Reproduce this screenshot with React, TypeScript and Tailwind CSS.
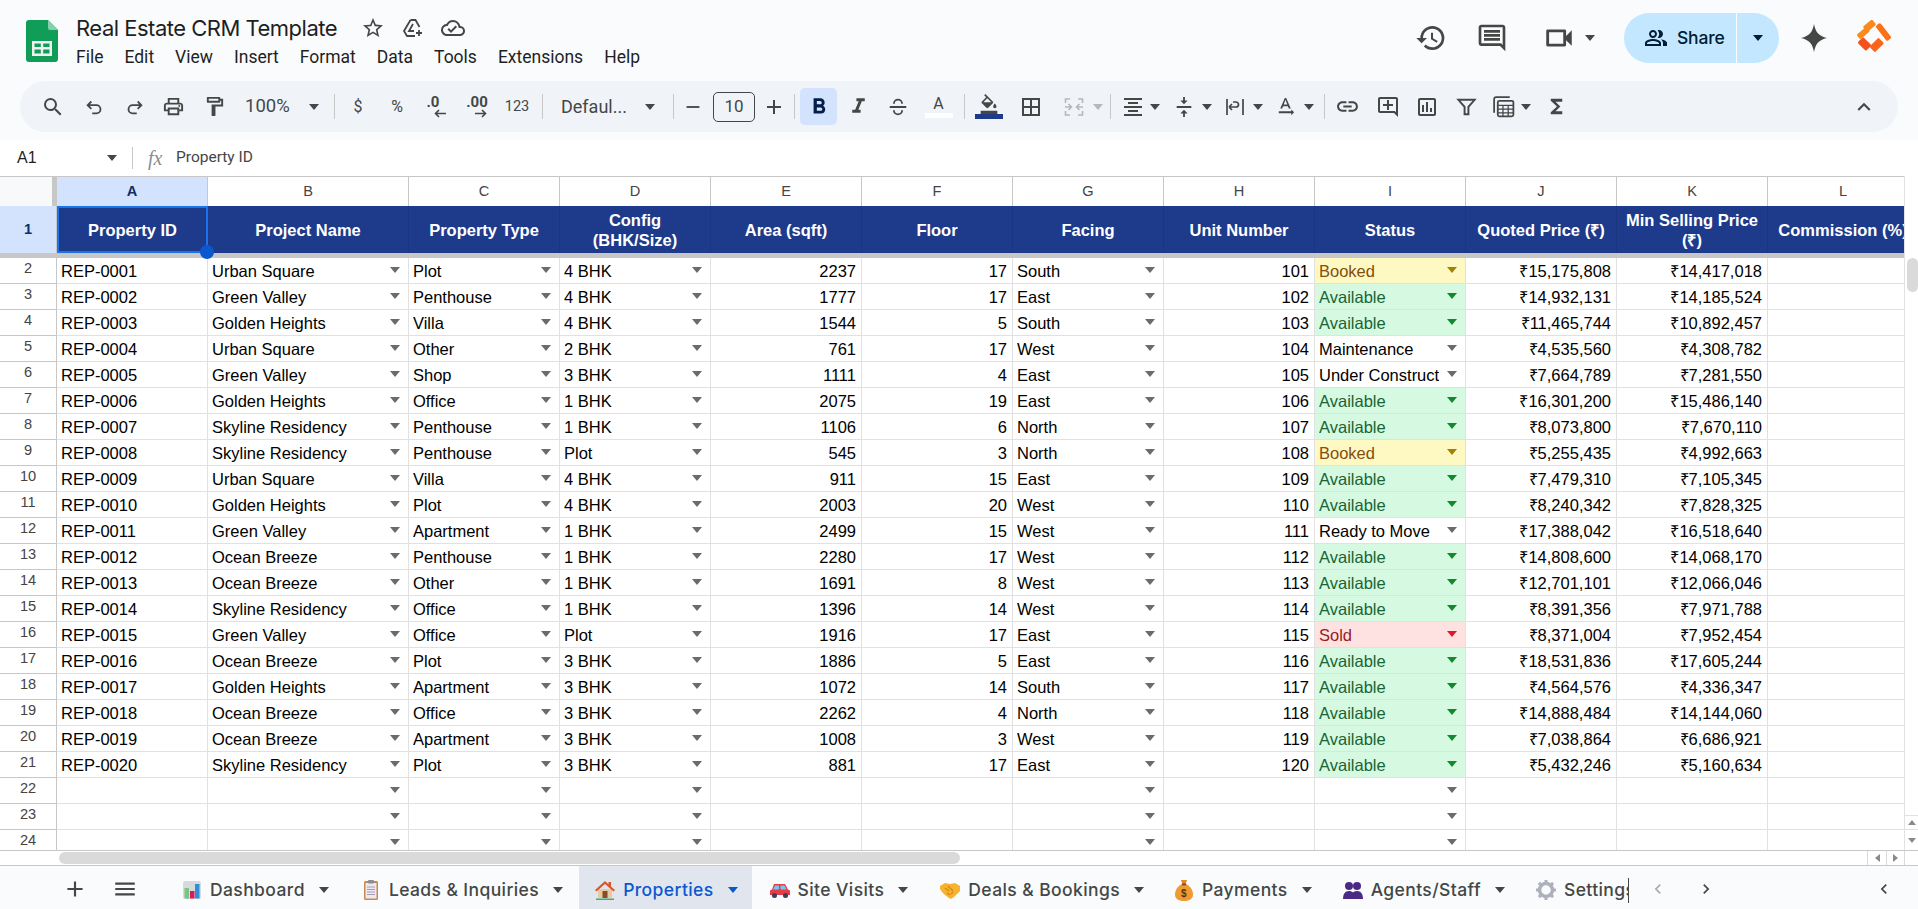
import React from 'react';
import {
  MdSearch, MdOutlinePrint, MdOutlineFormatPaint, MdRemove, MdAdd, MdFormatBold, MdFormatItalic,
  MdFormatColorFill, MdBorderAll, MdFormatAlignCenter, MdVerticalAlignCenter, MdOutlineTextRotationNone,
  MdLink, MdOutlineAddComment, MdOutlineInsertChart, MdFunctions, MdKeyboardArrowUp, MdHistory,
  MdOutlineComment, MdOutlineVideocam, MdOutlinePeopleAlt, MdStarBorder, MdOutlineCloudDone,
  MdMenu, MdChevronLeft, MdChevronRight,
} from 'react-icons/md';

const Caret = ({ className = 'text-[#444746]' }: { className?: string }) => (
  <svg width="10" height="6" viewBox="0 0 10 6" className={`shrink-0 ${className}`}>
    <path d="M0 0h10L5 6z" fill="currentColor" />
  </svg>
);

const Sep = ({ className }: { className: string }) => <div className={`w-px h-[25px] shrink-0 bg-[#c7c7c7] ${className}`} />;

const Tool = ({ className, children }: { className: string; children: React.ReactNode }) => (
  <div className={`flex items-center justify-center shrink-0 h-full text-[#444746] ${className}`}>{children}</div>
);

const Line = ({ size = 22, strokeWidth = 2, children }: { size?: number; strokeWidth?: number; children: React.ReactNode }) => (
  <svg width={size} height={size} viewBox="0 0 24 24" fill="none" stroke="currentColor" strokeWidth={strokeWidth}>
    {children}
  </svg>
);

const SheetsLogo = () => (
  <svg width="32" height="42" viewBox="0 0 32 42">
    <path d="M3 0h19l10 10v29a3 3 0 0 1-3 3H3a3 3 0 0 1-3-3V3a3 3 0 0 1 3-3z" fill="#0f9d58" />
    <path d="M22 0l10 10H24a2 2 0 0 1-2-2z" fill="#87ceac" />
    <path d="M6 21h20v15H6z M8.500 23.500v3.500h6.300v-3.500z M17.200 23.500v3.500h6.300v-3.500z M8.500 29.500v4h6.300v-4z M17.200 29.500v4h6.300v-4z" fill="#f1f1f1" fillRule="evenodd" />
  </svg>
);

const BrandLogo = () => (
  <svg width="36" height="38" viewBox="0 0 36 38">
    <rect x="0.800" y="11" width="13" height="6" rx="1.500" transform="rotate(-40 7.300 14)" fill="#fb8a1e" />
    <rect x="7.500" y="3.200" width="12" height="7" rx="1.500" transform="rotate(-40 13.500 6.700)" fill="#fb8a1e" />
    <rect x="18" y="10" width="19" height="6" rx="1.500" transform="rotate(52 27.500 13)" fill="#f97316" />
    <rect x="2.500" y="21" width="12" height="8" rx="1.500" transform="rotate(45 8.500 25)" fill="#f4511e" />
    <rect x="14.200" y="22" width="13" height="8" rx="1.500" transform="rotate(-45 20.700 26)" fill="#f9661b" />
  </svg>
);

const Gemini = () => (
  <svg width="26" height="28" viewBox="0 0 26 28">
    <path d="M13 0c1.500 8 4.500 12 13 14-8.500 2-11.500 6-13 14-1.500-8-4.500-12-13-14 8.500-2 11.500-6 13-14z" fill="#444746" />
  </svg>
);

const IconChart = () => (
  <svg width="20" height="20" viewBox="0 0 20 20">
    <rect x="1" y="1" width="18" height="18" rx="2.500" fill="#d7dadd" />
    <rect x="2.500" y="8" width="4.500" height="10.500" fill="#7bc67e" />
    <rect x="8" y="11" width="4.500" height="7.500" fill="#d81b60" />
    <rect x="13" y="4" width="4.500" height="14.500" fill="#2f8fd8" />
  </svg>
);

const IconClipboard = () => (
  <svg width="20" height="22" viewBox="0 0 20 22">
    <rect x="3" y="2" width="14" height="19" rx="1.500" fill="#c98a4b" />
    <rect x="4.500" y="4" width="11" height="15.500" fill="#ece8f4" />
    <rect x="7" y="1" width="6" height="3.500" rx="1" fill="#8d8d8d" />
    <path d="M6 8h8M6 10.500h8M6 13h8M6 15.500h8" stroke="#a49cb4" strokeWidth="1" />
  </svg>
);

const IconHouse = () => (
  <svg width="22" height="22" viewBox="0 0 22 22">
    <path d="M4 10h14v9H4z" fill="#e8c9a0" />
    <path d="M11 2L1 11l1.500 1.500L11 5l8.500 7.500L21 11l-4-3.500V3h-2.500v2.300z" fill="#d9582b" />
    <path d="M8.500 12h5v7h-5z" fill="#8a4b2d" />
    <path d="M2 19.500h18V21H2z" fill="#38b26a" />
  </svg>
);

const IconCar = () => (
  <svg width="22" height="20" viewBox="0 0 22 20">
    <path d="M5 4h11l3 5.500 2 1V15H1v-4.500l2-1z" fill="#e53c4a" />
    <path d="M6 5.500h4v4H4zM11.500 5.500h4l2 4h-6z" fill="#7cc4ec" />
    <circle cx="5.500" cy="15.500" r="2.500" fill="#3b3f57" />
    <circle cx="16.500" cy="15.500" r="2.500" fill="#3b3f57" />
  </svg>
);

const IconHandshake = () => (
  <svg width="22" height="22" viewBox="0 0 22 22">
    <path d="M1 7l5-3 5 1 5-1 5 3v5l-3 3-3 3-3 2-2-1-4-3-3-3-2-3z" fill="#f7b32b" />
    <path d="M6 9l4 3M9 7l5 5M8 14l3 2M12 15l2-2" stroke="#d98316" strokeWidth="1.200" fill="none" />
  </svg>
);

const IconMoney = () => (
  <svg width="20" height="24" viewBox="0 0 20 24">
    <path d="M7 2h6l-1.500 4.500h-3z" fill="#e08a2c" />
    <path d="M8 6h4c4 2 7 6 7 10.500 0 4-3 6.500-9 6.500s-9-2.500-9-6.500C1 12 4 8 8 6z" fill="#f09a34" />
    <path d="M8 5.500h4v1.800H8z" fill="#7a4a1a" />
    <text x="10" y="19" fontSize="10" fontWeight="700" textAnchor="middle" fill="#5b3310" fontFamily="'Liberation Sans', sans-serif">$</text>
  </svg>
);

const IconBusts = () => (
  <svg width="22" height="20" viewBox="0 0 22 20">
    <circle cx="7" cy="6" r="4" fill="#4b2a86" />
    <circle cx="15" cy="6" r="4" fill="#4b2a86" />
    <path d="M1 19c0-5 2-8 6-8 1.500 0 3 .5 4 1.500 1-1 2.500-1.500 4-1.500 4 0 6 3 6 8z" fill="#4b2a86" />
  </svg>
);

const IconGear = () => (
  <svg width="22" height="22" viewBox="0 0 22 22">
    <circle cx="11" cy="11" r="6.500" fill="none" stroke="#aeb1bd" strokeWidth="3.500" />
    <path d="M11 1v4M11 17v4M1 11h4M17 11h4M3.900 3.900l2.800 2.800M15.300 15.300l2.800 2.800M3.900 18.100l2.800-2.800M15.300 6.700l2.800-2.800" stroke="#aeb1bd" strokeWidth="3" />
  </svg>
);

const tabs = [
  { name: 'Dashboard', icon: <IconChart />, pad: 'pr-[14px]' },
  { name: 'Leads & Inquiries', icon: <IconClipboard />, pad: 'pr-[14px]' },
  { name: 'Properties', icon: <IconHouse />, pad: 'pr-[14px]', active: true },
  { name: 'Site Visits', icon: <IconCar />, pad: 'pr-[14px]' },
  { name: 'Deals & Bookings', icon: <IconHandshake />, pad: 'pr-[12px]' },
  { name: 'Payments', icon: <IconMoney />, pad: 'pr-[13px]' },
  { name: 'Agents/Staff', icon: <IconBusts />, pad: 'pr-[13px]' },
  { name: 'Settings', icon: <IconGear />, pad: 'pr-[14px]' },
];

const menu = ['File', 'Edit', 'View', 'Insert', 'Format', 'Data', 'Tools', 'Extensions', 'Help'];

const letters = ['A', 'B', 'C', 'D', 'E', 'F', 'G', 'H', 'I', 'J', 'K', 'L'];

const headers = [
  'Property ID', 'Project Name', 'Property Type', 'Config\n(BHK/Size)', 'Area (sqft)', 'Floor', 'Facing', 'Unit Number',
  'Status', 'Quoted Price (₹)', 'Min Selling Price\n(₹)', 'Commission (%)',
];

type Row = [string, string, string, string, number, number, string, number, string, string, string];

const rows: Row[] = [
  ['REP-0001', 'Urban Square', 'Plot', '4 BHK', 2237, 17, 'South', 101, 'Booked', '₹15,175,808', '₹14,417,018'],
  ['REP-0002', 'Green Valley', 'Penthouse', '4 BHK', 1777, 17, 'East', 102, 'Available', '₹14,932,131', '₹14,185,524'],
  ['REP-0003', 'Golden Heights', 'Villa', '4 BHK', 1544, 5, 'South', 103, 'Available', '₹11,465,744', '₹10,892,457'],
  ['REP-0004', 'Urban Square', 'Other', '2 BHK', 761, 17, 'West', 104, 'Maintenance', '₹4,535,560', '₹4,308,782'],
  ['REP-0005', 'Green Valley', 'Shop', '3 BHK', 1111, 4, 'East', 105, 'Under Construction', '₹7,664,789', '₹7,281,550'],
  ['REP-0006', 'Golden Heights', 'Office', '1 BHK', 2075, 19, 'East', 106, 'Available', '₹16,301,200', '₹15,486,140'],
  ['REP-0007', 'Skyline Residency', 'Penthouse', '1 BHK', 1106, 6, 'North', 107, 'Available', '₹8,073,800', '₹7,670,110'],
  ['REP-0008', 'Skyline Residency', 'Penthouse', 'Plot', 545, 3, 'North', 108, 'Booked', '₹5,255,435', '₹4,992,663'],
  ['REP-0009', 'Urban Square', 'Villa', '4 BHK', 911, 15, 'East', 109, 'Available', '₹7,479,310', '₹7,105,345'],
  ['REP-0010', 'Golden Heights', 'Plot', '4 BHK', 2003, 20, 'West', 110, 'Available', '₹8,240,342', '₹7,828,325'],
  ['REP-0011', 'Green Valley', 'Apartment', '1 BHK', 2499, 15, 'West', 111, 'Ready to Move', '₹17,388,042', '₹16,518,640'],
  ['REP-0012', 'Ocean Breeze', 'Penthouse', '1 BHK', 2280, 17, 'West', 112, 'Available', '₹14,808,600', '₹14,068,170'],
  ['REP-0013', 'Ocean Breeze', 'Other', '1 BHK', 1691, 8, 'West', 113, 'Available', '₹12,701,101', '₹12,066,046'],
  ['REP-0014', 'Skyline Residency', 'Office', '1 BHK', 1396, 14, 'West', 114, 'Available', '₹8,391,356', '₹7,971,788'],
  ['REP-0015', 'Green Valley', 'Office', 'Plot', 1916, 17, 'East', 115, 'Sold', '₹8,371,004', '₹7,952,454'],
  ['REP-0016', 'Ocean Breeze', 'Plot', '3 BHK', 1886, 5, 'East', 116, 'Available', '₹18,531,836', '₹17,605,244'],
  ['REP-0017', 'Golden Heights', 'Apartment', '3 BHK', 1072, 14, 'South', 117, 'Available', '₹4,564,576', '₹4,336,347'],
  ['REP-0018', 'Ocean Breeze', 'Office', '3 BHK', 2262, 4, 'North', 118, 'Available', '₹14,888,484', '₹14,144,060'],
  ['REP-0019', 'Ocean Breeze', 'Apartment', '3 BHK', 1008, 3, 'West', 119, 'Available', '₹7,038,864', '₹6,686,921'],
  ['REP-0020', 'Skyline Residency', 'Plot', '3 BHK', 881, 17, 'East', 120, 'Available', '₹5,432,246', '₹5,160,634'],
];

const gridCols = 'grid grid-cols-[57px_151px_201px_repeat(10,151px)] w-[1920px]';
const cellBase = 'h-[26px] border-r border-b border-[#e1e1e1] flex items-center overflow-hidden whitespace-nowrap pt-[2px]';

const statusStyle: Record<string, { cell: string; caret: string }> = {
  Booked: { cell: 'bg-[#fef9c3] text-[#854d0e]', caret: 'text-[#a18207]' },
  Available: { cell: 'bg-[#d6f9e2] text-[#166534]', caret: 'text-[#12892e]' },
  Sold: { cell: 'bg-[#fee2e2] text-[#991b1b]', caret: 'text-[#e0182d]' },
};

const TextCell = ({ value }: { value: string }) => <div className={`${cellBase} pl-[4px]`}>{value}</div>;

const NumCell = ({ value }: { value: string | number }) => <div className={`${cellBase} justify-end pr-[5px]`}>{value}</div>;

const DropCell = ({ value, className = '', caret = 'text-[#6b6b6b]' }: { value?: string; className?: string; caret?: string }) => (
  <div className={`${cellBase} pl-[4px] pr-[8px] ${className}`}>
    <span className="flex-1 min-w-0 overflow-hidden">{value}</span>
    <Caret className={`ml-[8px] mb-[3px] ${caret}`} />
  </div>
);

const RowNum = ({ n }: { n: number }) => (
  <div className="h-[26px] border-r border-b border-[#c7c7c7] flex items-center justify-center pb-[3px] text-[14.6px] text-[#444]">{n}</div>
);

const App: React.FC = () => {
  return (
    <div className="w-[1918px] h-[909px] overflow-hidden flex flex-col bg-white font-['Liberation_Sans',sans-serif] text-black">
      {/* Title bar and toolbar */}
      <div className="h-[140px] shrink-0 bg-[#f9fbfd] flex flex-col font-['Roboto',sans-serif]">
        <div className="h-[81px] flex items-start shrink-0">
          <div className="ml-[26px] mt-[20px]"><SheetsLogo /></div>
          <div className="ml-[18px] mt-[13px] flex flex-col">
            <div className="flex items-center h-[30px]">
              <span className="text-[22px] text-[#1f1f1f] font-['Inter',sans-serif] tracking-[-0.5px]">Real Estate CRM Template</span>
              <div className="flex items-center ml-[24px] text-[#444746] gap-[16px]">
                <MdStarBorder size={24} />
                <Line size={24} strokeWidth={1.8}>
                  <path d="M9.500 4L3 15l3 5h8M9.500 4h5l4 7M12 8l-4 7h5M18 14v6M15 17h6" />
                </Line>
                <MdOutlineCloudDone size={24} />
              </div>
            </div>
            <div className="flex items-center mt-[1px] h-[27px] gap-[21px] text-[17.5px] text-[#1f1f1f]">
              {menu.map(m => <span key={m}>{m}</span>)}
            </div>
          </div>
          <div className="ml-auto flex items-center h-[50px] mt-[13px] text-[#444746]">
            <MdHistory size={32} />
            <div className="ml-[29px]"><MdOutlineComment size={32} /></div>
            <div className="ml-[34px]"><MdOutlineVideocam size={34} /></div>
            <Caret className="ml-[9px] text-[#444746]" />
            <div className="ml-[29px] w-[155px] h-[50px] rounded-full bg-[#c2e7ff] flex items-center text-[#001d35]">
              <div className="w-[113px] h-full flex items-center pl-[20px] gap-[9px] border-r border-[#f9fbfd]">
                <MdOutlinePeopleAlt size={24} />
                <span className="text-[17.5px] font-medium font-['Inter',sans-serif] tracking-[-0.2px]">Share</span>
              </div>
              <div className="flex-1 flex items-center justify-center"><Caret className="text-[#001d35]" /></div>
            </div>
            <div className="ml-[22px]"><Gemini /></div>
            <div className="ml-[29px] mr-[26px]"><BrandLogo /></div>
          </div>
        </div>

        <div className="ml-[20px] w-[1878px] h-[51px] shrink-0 rounded-full bg-[#f0f4f9] flex items-center pl-[12px] text-[#444746]">
          <Tool className="w-[42px]"><MdSearch size={24} /></Tool>
          <Tool className="w-[42px]">
            <Line><path d="M8 6l-4 4 4 4M4 10h9.500a4.500 4.500 0 0 1 0 9H9" /></Line>
          </Tool>
          <Tool className="w-[36px]">
            <Line><path d="M16 6l4 4-4 4M20 10h-9.500a4.500 4.500 0 0 0 0 9H15" /></Line>
          </Tool>
          <Tool className="w-[43px]"><MdOutlinePrint size={23} /></Tool>
          <Tool className="w-[38px]"><MdOutlineFormatPaint size={23} /></Tool>
          <div className="w-[91px] h-full shrink-0 flex items-center justify-between pl-[12px] pr-[5px] text-[18.5px]"><span>100%</span><Caret /></div>
          <Sep className="ml-[10px]" />
          <Tool className="w-[46px] text-[16px]">$</Tool>
          <Tool className="w-[32px] text-[16px]">%</Tool>
          <Tool className="w-[48px] flex-col">
            <span className="text-[15px] font-bold leading-[13px] -ml-[8px]">.0</span>
            <svg width="12" height="9" viewBox="0 0 12 9" className="ml-[6px]"><path d="M12 4.500H2M5 1L1.500 4.500 5 8" fill="none" stroke="currentColor" strokeWidth="1.600" /></svg>
          </Tool>
          <Tool className="w-[32px] flex-col">
            <span className="text-[15px] font-bold leading-[13px]">.00</span>
            <svg width="12" height="9" viewBox="0 0 12 9" className="ml-[8px]"><path d="M0 4.500h10M7 1l3.500 3.500L7 8" fill="none" stroke="currentColor" strokeWidth="1.600" /></svg>
          </Tool>
          <Tool className="w-[48px] text-[14.6px]">123</Tool>
          <Sep className="ml-[1px]" />
          <div className="w-[123px] h-full shrink-0 flex items-center justify-between pl-[18px] pr-[11px] text-[18px]"><span>Defaul...</span><Caret /></div>
          <Sep className="ml-[7px]" />
          <Tool className="w-[37px]"><MdRemove size={22} /></Tool>
          <div className="w-[42px] h-[30px] ml-[2px] shrink-0 border border-[#444746] rounded-[5px] flex items-center justify-center text-[17px]">10</div>
          <Tool className="w-[38px]"><MdAdd size={24} /></Tool>
          <Sep className="ml-[1px]" />
          <div className="ml-[5px] w-[37px] h-[37px] shrink-0 rounded-[5px] bg-[#d3e3fd] flex items-center justify-center text-[#041e49]"><MdFormatBold size={26} /></div>
          <Tool className="w-[42px]"><MdFormatItalic size={25} /></Tool>
          <Tool className="w-[38px]">
            <Line><path d="M3 12h18M7.500 8.500a4.500 4.500 0 0 1 9 0M7.500 15.500a4.500 4.500 0 0 0 9 0" /></Line>
          </Tool>
          <Tool className="w-[43px] flex-col">
            <span className="text-[16px] leading-[18px]">A</span>
            <div className="w-[28px] h-[5px] bg-white" />
          </Tool>
          <Sep className="ml-[4px]" />
          <Tool className="w-[48px] flex-col">
            <MdFormatColorFill size={20} />
            <div className="w-[28px] h-[5px] bg-[#1e3a8a]" />
          </Tool>
          <Tool className="w-[35px]"><MdBorderAll size={24} /></Tool>
          <Tool className="w-[45px] pl-[6px]">
            <svg width="22" height="22" viewBox="0 0 22 22" fill="none" stroke="#b4b7bb" strokeWidth="1.600">
              <path d="M7 3H2.500v4M2.500 15v4H7M15 3h4.500v4M19.500 15v4H15M2 11h6M5.500 8l3 3-3 3M20 11h-6M16.500 8l-3 3 3 3" />
            </svg>
          </Tool>
          <Tool className="w-[10px]"><Caret className="text-[#b4b7bb]" /></Tool>
          <Sep className="ml-[7px]" />
          <Tool className="pl-[10px]"><MdFormatAlignCenter size={24} /><span className="ml-[5px]"><Caret /></span></Tool>
          <Tool className="pl-[13px]"><MdVerticalAlignCenter size={22} /><span className="ml-[7px]"><Caret /></span></Tool>
          <Tool className="pl-[13px]">
            <svg width="20" height="22" viewBox="0 0 20 22" fill="none" stroke="currentColor" strokeWidth="1.700">
              <path d="M2 3v16M18 3v16M4 11h7a2.500 2.500 0 0 0 0-5H8M4 11l3-3M4 11l3 3" />
            </svg>
            <span className="ml-[8px]"><Caret /></span>
          </Tool>
          <Tool className="pl-[11px]"><MdOutlineTextRotationNone size={23} /><span className="ml-[7px]"><Caret /></span></Tool>
          <Sep className="ml-[10px]" />
          <Tool className="w-[45px]"><MdLink size={25} /></Tool>
          <Tool className="w-[36px]"><MdOutlineAddComment size={24} /></Tool>
          <Tool className="w-[42px]"><MdOutlineInsertChart size={24} /></Tool>
          <Tool className="w-[37px]">
            <Line size={23}><path d="M3.500 5h17L14 12.500V20h-4v-7.500z" /></Line>
          </Tool>
          <Tool className="w-[36px]">
            <Line size={25} strokeWidth={1.700}>
              <path d="M3 18V5a2 2 0 0 1 2-2h13" />
              <rect x="6.500" y="6.500" width="15" height="15" rx="1.500" />
              <path d="M6.500 11h15M6.500 14.500h15M6.500 18h15M11.500 11v10.500M16.500 11v10.500" strokeWidth="1.200" />
            </Line>
          </Tool>
          <Tool className="w-[10px]"><Caret /></Tool>
          <Tool className="w-[50px]"><MdFunctions size={23} /></Tool>
          <Tool className="ml-auto w-[28px] mr-[20px]"><MdKeyboardArrowUp size={26} /></Tool>
        </div>
      </div>

      {/* Formula bar */}
      <div className="h-[36px] shrink-0 flex items-center text-[#1f1f1f]">
        <span className="ml-[17px] w-[90px] text-[16px]">A1</span>
        <Caret />
        <div className="ml-[15px] w-px h-[22px] bg-[#c7c7c7]" />
        <span className="ml-[15px] w-[22px] font-['Liberation_Serif',serif] italic text-[20px] text-[#8a8d91]">fx</span>
        <span className="ml-[6px] text-[15.5px] font-['Roboto',sans-serif] text-[#444746]">Property ID</span>
      </div>

      {/* Sheet */}
      <div className="h-[674px] shrink-0 flex">
        <div className="w-[1904px] h-full overflow-hidden flex flex-col text-[16.5px]">
          <div className={`${gridCols} h-[30px] shrink-0 border-t border-[#c7c7c7]`}>
            <div className="border-r-[5px] border-[#c7c7c7] bg-[#f8f9fa]" />
            {letters.map((l, i) => (
              <div
                key={l}
                className={`flex items-center justify-center border-r border-[#c7c7c7] text-[14.6px] ${i === 0 ? 'bg-[#d3e3fd] font-bold text-[#0b2f6b]' : 'text-[#444]'}`}
              >
                {l}
              </div>
            ))}
          </div>
          <div className={`${gridCols} h-[47px] shrink-0`}>
            <div className="bg-[#d3e3fd] flex items-center justify-center border-r border-[#c7c7c7] text-[14.6px] font-bold text-[#0b2f6b]">1</div>
            {headers.map((h, i) => (
              <div
                key={h}
                className={`relative flex items-center justify-center text-center whitespace-pre bg-[#1e3a8a] text-white font-bold leading-[20px] ${i === 0 ? 'border-2 border-[#1a73e8]' : 'border-r border-[#1c3580]'}`}
              >
                {h}
                {i === 0 && <div className="absolute -right-[8px] -bottom-[8px] w-[14px] h-[14px] rounded-full bg-[#0b57d0] z-10" />}
              </div>
            ))}
          </div>
          <div className="h-[5px] shrink-0 bg-[#c7c7c7]" />
          <div className="flex-1 min-h-0 overflow-hidden">
            {rows.map((r, i) => {
              const st = statusStyle[r[8]];
              return (
                <div key={r[0]} className={gridCols}>
                  <RowNum n={i + 2} />
                  <TextCell value={r[0]} />
                  <DropCell value={r[1]} />
                  <DropCell value={r[2]} />
                  <DropCell value={r[3]} />
                  <NumCell value={r[4]} />
                  <NumCell value={r[5]} />
                  <DropCell value={r[6]} />
                  <NumCell value={r[7]} />
                  <DropCell value={r[8]} className={st ? st.cell : ''} caret={st ? st.caret : undefined} />
                  <NumCell value={r[9]} />
                  <NumCell value={r[10]} />
                  <div className={cellBase} />
                </div>
              );
            })}
            {[22, 23, 24].map(n => (
              <div key={n} className={gridCols}>
                <RowNum n={n} />
                <div className={cellBase} />
                <DropCell />
                <DropCell />
                <DropCell />
                <div className={cellBase} />
                <div className={cellBase} />
                <DropCell />
                <div className={cellBase} />
                <DropCell />
                <div className={cellBase} />
                <div className={cellBase} />
                <div className={cellBase} />
              </div>
            ))}
          </div>
        </div>
        {/* Vertical scrollbar */}
        <div className="w-[14px] h-full flex flex-col border-l border-[#e1e1e1]">
          <div className="h-[82px] shrink-0" />
          <div className="ml-[2px] w-[11px] h-[34px] rounded-full bg-[#dadada]" />
          <div className="mt-auto h-[15px] flex items-center justify-center border-y border-[#e1e1e1]">
            <svg width="8" height="5" viewBox="0 0 8 5"><path d="M4 0l4 5H0z" fill="#8a8a8a" /></svg>
          </div>
          <div className="h-[20px] flex items-center justify-center">
            <svg width="8" height="5" viewBox="0 0 8 5"><path d="M0 0h8L4 5z" fill="#8a8a8a" /></svg>
          </div>
        </div>
      </div>

      {/* Horizontal scrollbar */}
      <div className="h-[16px] shrink-0 flex items-center border-y border-[#c7c7c7]">
        <div className="ml-[59px] w-[901px] h-[12px] rounded-full bg-[#dadada]" />
        <div className="ml-auto flex h-full border-l border-[#dadada]">
          <div className="w-[19px] flex items-center justify-center border-r border-[#dadada]">
            <svg width="5" height="8" viewBox="0 0 5 8"><path d="M5 0v8L0 4z" fill="#8a8a8a" /></svg>
          </div>
          <div className="w-[18px] flex items-center justify-center border-r border-[#dadada]">
            <svg width="5" height="8" viewBox="0 0 5 8"><path d="M0 0v8l5-4z" fill="#8a8a8a" /></svg>
          </div>
          <div className="w-[13px]" />
        </div>
      </div>

      {/* Sheet tabs */}
      <div className="h-[43px] shrink-0 flex items-center bg-[#f9fbfd] text-[#444746] font-['Inter',sans-serif]">
        <div className="ml-[62px] w-[26px] flex justify-center pt-[2px] text-[#444746]"><MdAdd size={28} /></div>
        <div className="ml-[24px] w-[26px] flex justify-center pt-[2px] text-[#444746]"><MdMenu size={28} /></div>
        <div className="ml-[28px] w-[1462px] h-full overflow-hidden flex items-stretch gap-[2px] shrink-0">
          {tabs.map(t => (
            <div
              key={t.name}
              className={`flex items-center shrink-0 pt-[5px] pl-[15px] text-[17.5px] font-medium tracking-[0.4px] ${t.pad} ${t.active ? 'bg-[#e1e6ee] text-[#0b57d0]' : ''}`}
            >
              <span className="w-[22px] flex justify-center shrink-0">{t.icon}</span>
              <span className="ml-[7px]">{t.name}</span>
              <Caret className={`ml-[14px] ${t.active ? 'text-[#0b57d0]' : 'text-[#444746]'}`} />
            </div>
          ))}
        </div>
        <div className="w-px h-[25px] mt-[5px] shrink-0 bg-[#444746]" />
        <div className="ml-[19px] w-[20px] flex justify-center pt-[2px] text-[#a9acb0]"><MdChevronLeft size={28} /></div>
        <div className="ml-[28px] w-[20px] flex justify-center pt-[2px] text-[#444746]"><MdChevronRight size={28} /></div>
        <div className="ml-auto mr-[24px] w-[20px] flex justify-center pt-[2px] text-[#444746]"><MdChevronLeft size={28} /></div>
      </div>
    </div>
  );
};

export default App;
